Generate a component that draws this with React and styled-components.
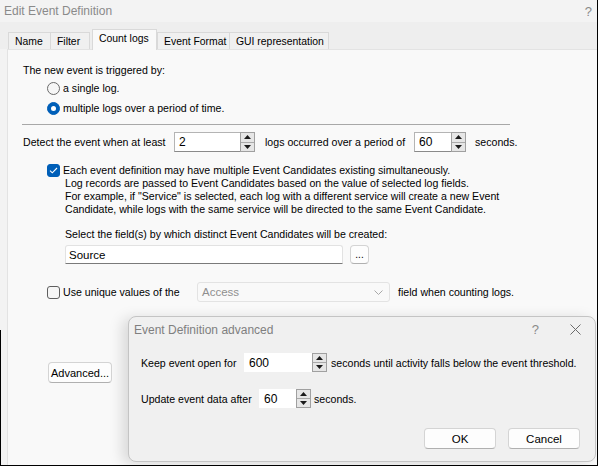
import React from 'react';
import styled, { createGlobalStyle } from 'styled-components';

const GlobalStyle = createGlobalStyle`
  html, body {
    margin: 0;
    padding: 0;
    background: #ffffff;
  }
`;

const font = `"Liberation Sans", Arial, sans-serif`;

const Window = styled.div`
  position: relative;
  width: 598px;
  height: 466px;
  box-sizing: border-box;
  background: #f3f3f3;
  border-right: 1px solid #000;
  border-bottom: 1px solid #000;
  display: flex;
  flex-direction: column;
  overflow: hidden;
  font-family: ${font};
  font-size: 10.6px;
  color: #000;

  &::after {
    content: '';
    position: absolute;
    left: 0;
    top: 330px;
    bottom: 0;
    width: 1px;
    background: #000;
  }
`;

const TitleBar = styled.div`
  height: 22px;
  flex: none;
  display: flex;
  align-items: center;
  justify-content: space-between;
  padding: 0 5px 0 4px;
  color: #8a8a8a;
  font-size: 12px;
`;

const HelpMark = styled.span`
  color: #8a8a8a;
  font-size: 13px;
`;

const TabStrip = styled.div`
  height: 27px;
  flex: none;
  display: flex;
  align-items: flex-end;
  padding-left: 8px;
  background: #eeeeee;
`;

const Tab = styled.div`
  box-sizing: border-box;
  width: ${(p) => p.$w}px;
  height: ${(p) => (p.$active ? 21 : 17)}px;
  border: 1px solid #d9d9d9;
  border-bottom: none;
  margin-left: ${(p) => (p.$active ? 2 : p.$first ? 0 : -1)}px;
  margin-right: ${(p) => (p.$active ? 1 : 0)}px;
  background: ${(p) => (p.$active ? '#f9f9f9' : '#f0f0f0')};
  display: flex;
  align-items: ${(p) => (p.$active ? 'flex-start' : 'center')};
  padding: ${(p) => (p.$active ? '3px 0 0 6px' : '0 0 0 6px')};
  font-size: 10.4px;
  white-space: nowrap;
  overflow: hidden;
  position: relative;
  z-index: ${(p) => (p.$active ? 1 : 0)};
  bottom: ${(p) => (p.$active ? '-1px' : '0')};
`;

const Panel = styled.div`
  flex: 1;
  margin-left: 7px;
  background: #f9f9f9;
  border-left: 1px solid #e3e3e3;
  border-top: 1px solid #e3e3e3;
  padding-left: 15px;
  display: flex;
  flex-direction: column;
`;

const Line = styled.div`
  height: 14px;
  line-height: 14px;
  white-space: nowrap;
  margin-top: ${(p) => p.$mt || 0}px;
  padding-left: ${(p) => p.$indent || 0}px;
`;

const Options = styled.div`
  display: flex;
  flex-direction: column;
  padding-left: 24px;
  margin-top: 1px;
`;

const OptionRow = styled.label`
  height: 20px;
  display: flex;
  align-items: center;
  gap: 3px;
  white-space: nowrap;
`;

const Radio = styled.span`
  box-sizing: border-box;
  width: 13px;
  height: 13px;
  border-radius: 50%;
  border: 1px solid ${(p) => (p.$checked ? '#005fb8' : '#6a6a6a')};
  background: ${(p) => (p.$checked ? '#005fb8' : '#f6f6f6')};
  display: flex;
  align-items: center;
  justify-content: center;

  &::after {
    content: '';
    display: ${(p) => (p.$checked ? 'block' : 'none')};
    width: 5px;
    height: 5px;
    border-radius: 50%;
    background: #fff;
  }
`;

const Separator = styled.div`
  height: 1px;
  width: 488px;
  margin: 6px 0 0 -1px;
  background: #a8a8a8;
`;

const FieldRow = styled.div`
  display: flex;
  align-items: center;
  height: ${(p) => p.$h || 20}px;
  margin-top: ${(p) => p.$mt || 0}px;
  padding-left: ${(p) => p.$indent || 0}px;
  white-space: nowrap;
`;

const Label = styled.span`
  flex: none;
  width: ${(p) => (p.$w ? `${p.$w}px` : 'auto')};
  margin-left: ${(p) => p.$ml || 0}px;
`;

const SpinBox = styled.div`
  flex: none;
  box-sizing: border-box;
  display: flex;
  width: ${(p) => p.$w}px;
  height: ${(p) => p.$h}px;
  border: 1px solid ${(p) => (p.$flat ? 'transparent' : '#b4b4b4')};
  border-bottom-color: ${(p) => (p.$flat ? 'transparent' : '#8a8a8a')};
  background: #fff;
`;

const SpinValue = styled.span`
  flex: 1;
  display: flex;
  align-items: center;
  padding-left: 4px;
  font-size: 12px;
`;

const SpinButtons = styled.div`
  flex: none;
  width: 15px;
  display: flex;
  flex-direction: column;
  border: 1px solid #a0a0a0;
  box-sizing: border-box;
  margin: -1px -1px -1px 0;
  background: #e6e6e6;
`;

const SpinHalf = styled.div`
  flex: 1;
  display: flex;
  align-items: center;
  justify-content: center;
  border-top: ${(p) => (p.$down ? '1px solid #a9a9a9' : 'none')};
`;

const Arrow = ({ down }) => (
  <svg width="7" height="4" viewBox="0 0 7 4">
    <path d={down ? 'M0 0h7L3.5 4z' : 'M3.5 0L7 4H0z'} fill="#1a1a1a" />
  </svg>
);

const Spin = ({ value, w, h = 20, flat }) => (
  <SpinBox $w={w} $h={h} $flat={flat}>
    <SpinValue>{value}</SpinValue>
    <SpinButtons>
      <SpinHalf>
        <Arrow />
      </SpinHalf>
      <SpinHalf $down>
        <Arrow down />
      </SpinHalf>
    </SpinButtons>
  </SpinBox>
);

const Checkbox = styled.span`
  flex: none;
  box-sizing: border-box;
  width: 13px;
  height: 13px;
  border-radius: 3px;
  border: 1px solid ${(p) => (p.$checked ? '#005fb8' : '#5f5f5f')};
  background: ${(p) => (p.$checked ? '#005fb8' : '#f6f6f6')};
  display: flex;
  align-items: center;
  justify-content: center;
  margin-right: 3px;
`;

const CheckMark = () => (
  <svg width="9" height="7" viewBox="0 0 9 7">
    <path d="M1 3.6L3.3 5.8 8 1" stroke="#fff" strokeWidth="1.1" fill="none" />
  </svg>
);

const Paragraph = styled.div`
  padding-left: 42px;
  line-height: 13px;
  white-space: nowrap;
`;

const TextBox = styled.div`
  box-sizing: border-box;
  width: 278px;
  height: 19px;
  background: #fff;
  border: 1px solid #e2e2e2;
  border-bottom: 1px solid #7a7a7a;
  border-radius: 3px 3px 0 0;
  display: flex;
  align-items: center;
  padding-left: 3px;
  font-size: 11.5px;
`;

const Button = styled.button`
  box-sizing: border-box;
  width: ${(p) => p.$w}px;
  height: ${(p) => p.$h}px;
  margin-left: ${(p) => p.$ml || 0}px;
  padding: 0;
  background: #fdfdfd;
  border: 1px solid #d4d4d4;
  border-bottom-color: #b0b0b0;
  border-radius: 4px;
  font-family: ${font};
  font-size: ${(p) => p.$fs || 11.5}px;
  color: #000;
`;

const Combo = styled.div`
  flex: none;
  box-sizing: border-box;
  width: 193px;
  height: 20px;
  margin-left: 10px;
  border: 1px solid #e3e3e3;
  border-radius: 3px;
  background: #f9f9f9;
  display: flex;
  align-items: center;
  justify-content: space-between;
  padding: 0 6px 0 4px;
  color: #8f8f8f;
  font-size: 11.5px;
`;

const Chevron = () => (
  <svg width="9" height="5" viewBox="0 0 9 5">
    <path d="M0.5 0.5L4.5 4.5 8.5 0.5" stroke="#a8a8a8" fill="none" />
  </svg>
);

const AdvancedDialog = styled.div`
  position: absolute;
  left: 128px;
  top: 316px;
  width: 468px;
  height: 146px;
  box-sizing: border-box;
  background: #f0f0f0;
  border: 1px solid #c4c4c4;
  border-radius: 8px;
  box-shadow: -6px 2px 14px rgba(0, 0, 0, 0.13);
  display: flex;
  flex-direction: column;
  z-index: 5;
`;

const DialogTitle = styled.div`
  height: 25px;
  display: flex;
  align-items: center;
  padding: 0 14px 0 5px;
  color: #7f7f7f;
  font-size: 12px;
`;

const TitleText = styled.span`
  flex: 1;
`;

const TitleIcons = styled.div`
  display: flex;
  align-items: center;
  gap: 31px;
`;

const DialogBody = styled.div`
  display: flex;
  flex-direction: column;
  padding-left: 12px;
`;

const ButtonRow = styled.div`
  display: flex;
  justify-content: flex-end;
  gap: 12px;
  padding-right: 15px;
  margin-top: 20px;
`;

const CloseIcon = () => (
  <svg width="11" height="11" viewBox="0 0 11 11">
    <path d="M0.5 0.5L10.5 10.5M10.5 0.5L0.5 10.5" stroke="#6b6b6b" strokeWidth="1" />
  </svg>
);

const tabs = [
  { name: 'Name', w: 43 },
  { name: 'Filter', w: 40 },
  { name: 'Count logs', w: 65, active: true },
  { name: 'Event Format', w: 73 },
  { name: 'GUI representation', w: 100 },
];

const App = () => (
  <>
    <GlobalStyle />
    <Window>
      <TitleBar>
        <span>Edit Event Definition</span>
        <HelpMark>?</HelpMark>
      </TitleBar>

      <TabStrip>
        {tabs.map((t, i) => (
          <Tab key={t.name} $w={t.w} $active={t.active} $first={i === 0}>
            {t.name}
          </Tab>
        ))}
      </TabStrip>

      <Panel>
        <Line $mt={13}>The new event is triggered by:</Line>
        <Options>
          <OptionRow>
            <Radio />
            a single log.
          </OptionRow>
          <OptionRow>
            <Radio $checked />
            multiple logs over a period of time.
          </OptionRow>
        </Options>

        <Separator />

        <FieldRow $mt={7}>
          <Label $w={151}>Detect the event when at least</Label>
          <Spin value="2" w={81} />
          <Label $ml={10} $w={149}>logs occurred over a period of</Label>
          <Spin value="60" w={52} />
          <Label $ml={9}>seconds.</Label>
        </FieldRow>

        <FieldRow $h={14} $mt={11} $indent={24}>
          <Checkbox $checked>
            <CheckMark />
          </Checkbox>
          Each event definition may have multiple Event Candidates existing simultaneously.
        </FieldRow>
        <Paragraph>
          Log records are passed to Event Candidates based on the value of selected log fields.
          <br />
          For example, if "Service" is selected, each log with a different service will create a new Event
          <br />
          Candidate, while logs with the same service will be directed to the same Event Candidate.
        </Paragraph>

        <Line $mt={11} $indent={42}>
          Select the field(s) by which distinct Event Candidates will be created:
        </Line>
        <FieldRow $h={19} $mt={4} $indent={42}>
          <TextBox>Source</TextBox>
          <Button $w={19} $h={19} $ml={7} $fs={10}>
            ...
          </Button>
        </FieldRow>

        <FieldRow $mt={18} $indent={24}>
          <Checkbox />
          <Label $w={124}>Use unique values of the</Label>
          <Combo>
            Access
            <Chevron />
          </Combo>
          <Label $ml={8}>field when counting logs.</Label>
        </FieldRow>

        <FieldRow $h={21} $mt={60} $indent={25}>
          <Button $w={64} $h={21} $fs={11}>
            Advanced...
          </Button>
        </FieldRow>
      </Panel>

      <AdvancedDialog>
        <DialogTitle>
          <TitleText>Event Definition advanced</TitleText>
          <TitleIcons>
            <HelpMark>?</HelpMark>
            <CloseIcon />
          </TitleIcons>
        </DialogTitle>
        <DialogBody>
          <FieldRow $h={19} $mt={11}>
            <Label $w={103}>Keep event open for</Label>
            <Spin value="600" w={83} h={19} flat />
            <Label $ml={4}>seconds until activity falls below the event threshold.</Label>
          </FieldRow>
          <FieldRow $h={19} $mt={17}>
            <Label $w={118}>Update event data after</Label>
            <Spin value="60" w={52} h={19} flat />
            <Label $ml={3}>seconds.</Label>
          </FieldRow>
          <ButtonRow>
            <Button $w={72} $h={21}>
              OK
            </Button>
            <Button $w={72} $h={21}>
              Cancel
            </Button>
          </ButtonRow>
        </DialogBody>
      </AdvancedDialog>
    </Window>
  </>
);

export default App;
